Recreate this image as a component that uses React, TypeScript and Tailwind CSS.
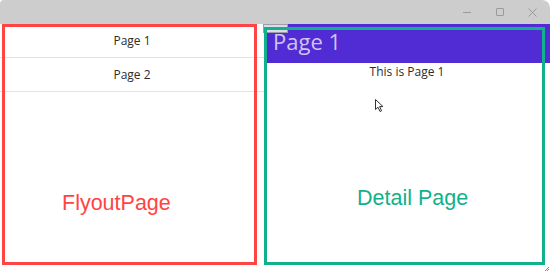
import React from 'react';

const pages = ['Page 1', 'Page 2'];

export default function App() {
  return (
    <div className="w-[550px] h-[272px] bg-white overflow-hidden relative font-['Open_Sans',sans-serif]">
      {/* window title bar */}
      <div className="h-[24px] bg-[#cdcdcd] rounded-tr-[8px] rounded-tl-[4px] flex items-center justify-end text-[#8c8c8c]">
        <div className="w-[8px] h-[1px] bg-[#9a9a9a] mr-[25px]" />
        <div className="w-[8px] h-[8px] border border-[#9a9a9a] rounded-[1px] mr-[24px]" />
        <svg width="9" height="9" viewBox="0 0 9 9" className="mr-[13px]">
          <path d="M0.5 0.5 L8.5 8.5 M8.5 0.5 L0.5 8.5" stroke="#9a9a9a" strokeWidth="1" />
        </svg>
      </div>

      <div className="flex h-[248px]">
        {/* flyout */}
        <div className="w-[264px] bg-white">
          {pages.map((p) => (
            <div
              key={p}
              className="h-[34px] flex items-center justify-center border-b border-[#e2e2e2] text-[12px] text-[#2d2d2d]"
            >
              {p}
            </div>
          ))}
        </div>

        {/* detail */}
        <div className="flex-1 flex flex-col">
          <div className="h-[39px] bg-[#512bd4] pl-[9px] pt-[6px]">
            <span className="text-[22px] leading-[22px] text-[#cdc5ee]">Page 1</span>
          </div>
          <div className="flex justify-center pt-[1px] text-[12px] leading-[16px] text-[#2d2d2d]">
            This is Page 1
          </div>
        </div>
      </div>

      {/* flyout toggle stub */}
      <div className="absolute left-[263px] top-[24px] w-[25px] h-[9px] bg-[#dcdce6] border border-[#9c9cae]" />

      {/* annotation frames */}
      <div className="absolute left-[2px] top-[24px] w-[255px] h-[241px] border-[3px] border-[#ff4444]" />
      <div className="absolute left-[264px] top-[27px] w-[281px] h-[238px] border-[3px] border-[#12b08c]" />

      <div className="absolute left-[62px] top-[193px] text-[21.5px] leading-none text-[#ff4444] font-['Liberation_Sans',Arial,sans-serif]">
        FlyoutPage
      </div>
      <div className="absolute left-[357px] top-[188px] text-[21.5px] leading-none text-[#12b08c] font-['Liberation_Sans',Arial,sans-serif]">
        Detail Page
      </div>

      {/* mouse cursor */}
      <svg className="absolute left-[375px] top-[99px]" width="10" height="14" viewBox="0 0 10 14">
        <path d="M0.5 0.5 L0.5 10.5 L3 8.2 L5 12.5 L6.6 11.8 L4.6 7.6 L8 7.6 Z" fill="white" stroke="#333" strokeWidth="1" strokeLinejoin="round" />
      </svg>

      {/* resize grip */}
      <svg className="absolute left-[544px] top-[266px]" width="6" height="6" viewBox="0 0 6 6">
        <path d="M5 1 L1 5 M5 3 L3 5" stroke="#888" strokeWidth="1" />
      </svg>
    </div>
  );
}
